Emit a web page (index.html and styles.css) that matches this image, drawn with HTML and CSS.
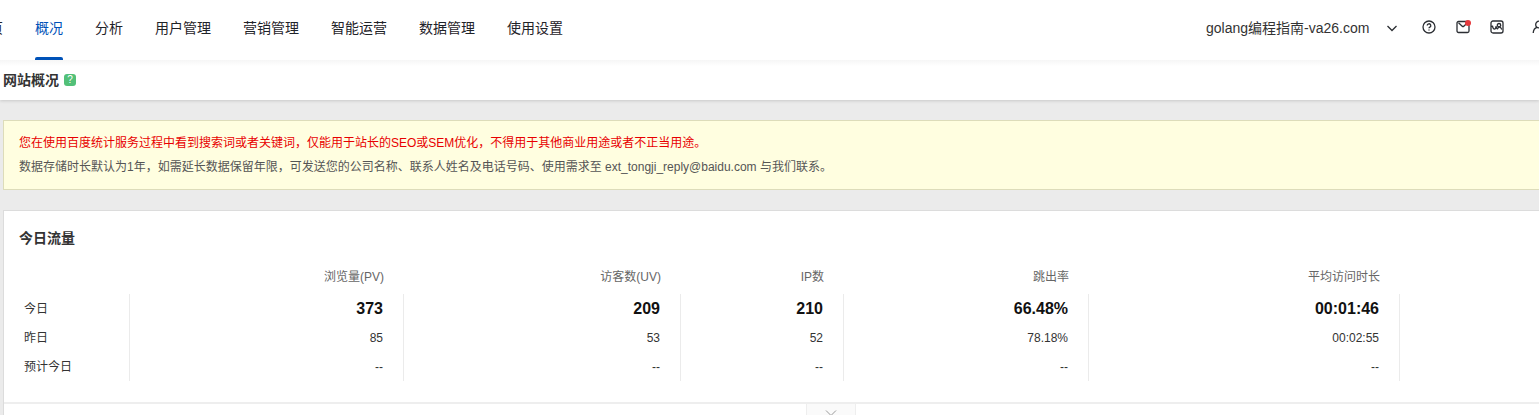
FILE: index.html
```html
<!DOCTYPE html>
<html lang="zh-CN">
    <head>
        <title>网站概况</title>
        <meta charset="UTF-8">
        <meta name="viewport" content="width=device-width, initial-scale=1.0">
        <link rel="stylesheet" href="styles.css">
    </head>
    <body>
        <header class="top-bar">
            <nav class="main-nav">
                <a href="#">首页</a>
                <a href="#" class="active">概况</a>
                <a href="#">分析</a>
                <a href="#">用户管理</a>
                <a href="#">营销管理</a>
                <a href="#">智能运营</a>
                <a href="#">数据管理</a>
                <a href="#">使用设置</a>
            </nav>
            <div class="top-tools">
                <div class="site-picker">
                    <select class="site-select" aria-label="网站">
                        <option>golang编程指南-va26.com</option>
                    </select>
                    <svg class="site-arrow" viewBox="0 0 12 12"><path d="M1.5 4L6 8.5L10.5 4"/></svg>
                </div>
                <div class="icon-group">
                    <button class="icon-btn" type="button" aria-label="帮助">
                        <svg viewBox="0 0 14 14">
                            <circle cx="7" cy="7" r="6"/>
                            <path d="M5.2 5.6a1.8 1.8 0 1 1 2.7 1.5c-.6.4-.9.6-.9 1.2M7 9.5v1.1"/>
                        </svg>
                    </button>
                    <button class="icon-btn mail-btn" type="button" aria-label="消息">
                        <svg viewBox="0 0 14 14">
                            <rect x="1" y="1.5" width="12" height="11" rx="1.5"/>
                            <path d="M2.5 2.8L6.2 6.2Q7 6.9 7.8 6.2L11.5 2.8"/>
                        </svg>
                        <span class="mail-dot"></span>
                    </button>
                    <button class="icon-btn" type="button" aria-label="图表">
                        <svg viewBox="0 0 14 14">
                            <rect x="1" y="1" width="12" height="12" rx="2"/>
                            <path d="M1 6.4L2.5 6.2Q3 9.1 4.4 9.1T6 6.2Q6.5 8.8 7.5 8.8L8.7 6.9M8.3 7.1Q10.5 6.3 11.8 9.6"/>
                            <circle cx="9" cy="5.2" r="1.7"/>
                        </svg>
                    </button>
                </div>
                <button class="icon-btn" type="button" aria-label="账户">
                    <svg viewBox="0 0 14 14">
                        <circle cx="7" cy="4.5" r="3.3"/>
                        <path d="M1.2 13Q1.5 8.4 5 7.4M12.8 13Q12.5 8.4 9 7.4"/>
                    </svg>
                </button>
            </div>
        </header>

        <div class="page-title">
            <h1>网站概况</h1>
            <button class="help-tag" type="button" aria-label="说明">?</button>
        </div>

        <main class="content">
            <div class="notice">
                <p class="notice-warn">您在使用百度统计服务过程中看到搜索词或者关键词，仅能用于站长的SEO或SEM优化，不得用于其他商业用途或者不正当用途。</p>
                <p>数据存储时长默认为1年，如需延长数据保留年限，可发送您的公司名称、联系人姓名及电话号码、使用需求至 ext_tongji_reply@baidu.com 与我们联系。</p>
            </div>

            <section class="card">
                <h2>今日流量</h2>
                <table class="flow-table">
                    <colgroup>
                        <col class="col-name">
                        <col class="col-pv">
                        <col class="col-uv">
                        <col class="col-ip">
                        <col class="col-bounce">
                        <col class="col-time">
                        <col class="col-rest">
                    </colgroup>
                    <thead>
                        <tr>
                            <td></td>
                            <th>浏览量(PV)</th>
                            <th>访客数(UV)</th>
                            <th>IP数</th>
                            <th>跳出率</th>
                            <th>平均访问时长</th>
                            <td></td>
                        </tr>
                    </thead>
                    <tbody>
                        <tr class="today">
                            <th>今日</th>
                            <td>373</td>
                            <td>209</td>
                            <td>210</td>
                            <td>66.48%</td>
                            <td>00:01:46</td>
                            <td></td>
                        </tr>
                        <tr>
                            <th>昨日</th>
                            <td>85</td>
                            <td>53</td>
                            <td>52</td>
                            <td>78.18%</td>
                            <td>00:02:55</td>
                            <td></td>
                        </tr>
                        <tr>
                            <th>预计今日</th>
                            <td>--</td>
                            <td>--</td>
                            <td>--</td>
                            <td>--</td>
                            <td>--</td>
                            <td></td>
                        </tr>
                    </tbody>
                </table>
                <div class="card-more">
                    <button class="more-btn" type="button" aria-label="展开">
                        <svg viewBox="0 0 12 12"><path d="M1 3.5L6 8.5L11 3.5"/></svg>
                    </button>
                </div>
            </section>
        </main>
    </body>
</html>
```

FILE: styles.css
```css
* {
  margin: 0;
  padding: 0;
  box-sizing: border-box;
}

body {
  display: flex;
  flex-direction: column;
  height: 100vh;
  overflow: hidden;
  font-family: "Liberation Sans", Arial, "Noto Sans CJK SC", sans-serif;
  font-size: 12px;
  color: #333;
  background-color: #ebebeb;
}

button {
  border: none;
  background: none;
  cursor: pointer;
}

svg {
  display: block;
  fill: none;
  stroke: #2b2e33;
  stroke-width: 1.3;
}

/* top bar */
.top-bar {
  position: relative;
  z-index: 2;
  display: flex;
  flex: none;
  justify-content: space-between;
  height: 60px;
  overflow: hidden;
  background-color: #fff;
}

.main-nav {
  display: flex;
  gap: 32px;
  margin-left: -25px;
}

.main-nav a {
  position: relative;
  height: 60px;
  font-size: 14px;
  line-height: 56px;
  color: #1f2329;
  text-decoration: none;
  white-space: nowrap;
}

.main-nav .active {
  color: #0052b8;
}

.main-nav .active::after {
  content: "";
  position: absolute;
  right: 0;
  bottom: 0;
  left: 0;
  height: 3px;
  border-radius: 2px 2px 0 0;
  background-color: #0052b8;
}

.top-tools {
  display: flex;
  align-items: center;
  gap: 28px;
  height: 56px;
  margin-right: -7px;
}

.icon-group {
  display: flex;
  gap: 20px;
}

.site-picker {
  position: relative;
  margin-right: -4px;
}

.site-select {
  padding-right: 28px;
  border: none;
  appearance: none;
  background: none;
  font-family: inherit;
  font-size: 14px;
  line-height: 20px;
  color: #333;
}

.site-arrow {
  position: absolute;
  top: 4px;
  right: 0;
  width: 12px;
  height: 12px;
  pointer-events: none;
}

.icon-btn {
  position: relative;
  width: 14px;
  height: 16px;
}

.icon-btn svg {
  width: 14px;
  height: 14px;
  margin-bottom: 2px;
}

.mail-dot {
  position: absolute;
  top: 0;
  right: -1px;
  width: 6px;
  height: 6px;
  border-radius: 50%;
  background-color: #e5393c;
}

/* page title */
.page-title {
  position: relative;
  display: flex;
  flex: none;
  align-items: center;
  gap: 5px;
  height: 40px;
  padding-left: 3px;
  background: linear-gradient(#f6f6f6, #fff 6px);
  box-shadow: 0 1px 3px rgba(0, 0, 0, 0.15);
}

h1,
h2 {
  font-size: 14px;
  line-height: 20px;
  color: #333;
}

.help-tag {
  width: 12px;
  height: 12px;
  border-radius: 3px;
  background-color: #52c078;
  font-family: inherit;
  font-size: 10px;
  line-height: 12px;
  color: #fff;
}

/* content */
.content {
  display: flex;
  flex: 1;
  flex-direction: column;
  gap: 20px;
  padding: 20px 0 0 3px;
}

.notice {
  padding: 10px 15px;
  border: 1px solid #dddcba;
  border-right: none;
  background-color: #fffee0;
  line-height: 24px;
  color: #555;
}

.notice-warn {
  color: #e80000;
}

.card {
  flex: 1;
  border-top: 1px solid #dcdcdc;
  border-left: 1px solid #dcdcdc;
  background-color: #fff;
}

.card h2 {
  padding: 17px 15px 12px;
  line-height: 20px;
}

.flow-table {
  width: 100%;
  table-layout: fixed;
  border-collapse: separate;
  border-spacing: 0;
}

/* relative widths, the table scales them to the card */
.col-name { width: 126px; }
.col-pv { width: 274px; }
.col-uv { width: 277px; }
.col-ip { width: 163px; }
.col-bounce { width: 245px; }
.col-time { width: 311px; }
.col-rest { width: 139px; }

.flow-table th,
.flow-table td {
  height: 29px;
  padding: 0 20px;
  font-weight: 400;
  line-height: 20px;
  text-align: right;
  white-space: nowrap;
}

.flow-table thead th,
.flow-table thead td {
  height: 34px;
  color: #666;
}

.flow-table tbody th {
  text-align: left;
}

.flow-table tbody th,
.flow-table tbody td {
  border-right: 1px solid #ebebeb;
}

.flow-table tbody td:last-child {
  border-right: none;
}

.flow-table .today td {
  font-size: 16px;
  font-weight: 700;
  color: #111;
}

.card-more {
  display: flex;
  justify-content: center;
  margin-top: 21px;
  border-top: 2px solid #eee;
}

.more-btn {
  display: flex;
  justify-content: center;
  width: 50px;
  height: 16px;
  margin-left: 118px;
  padding-top: 3px;
  border: 1px solid #eee;
  border-top: none;
  background-color: #fafafa;
}

.more-btn svg {
  width: 12px;
  height: 12px;
  stroke: #999;
  stroke-width: 1;
}
```
